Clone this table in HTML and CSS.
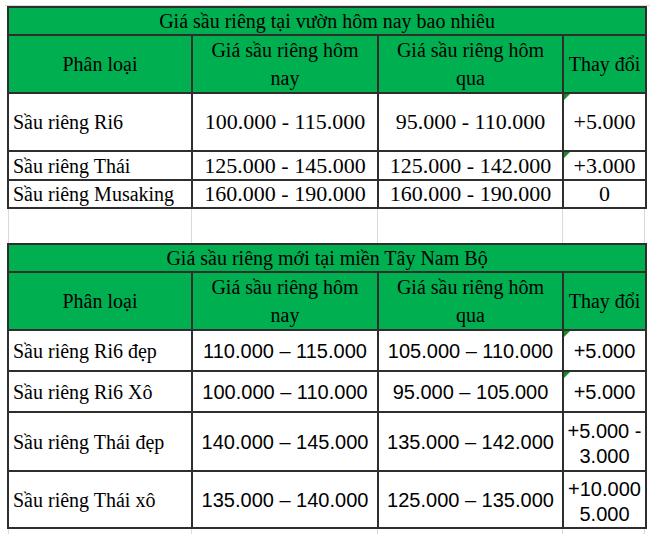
FILE: index.html
```html
<!DOCTYPE html>
<html lang="vi">
<head>
<meta charset="utf-8">
<title>Giá sầu riêng</title>
<link rel="stylesheet" href="styles.css">
</head>
<body>
<div class="sheet">
  <div class="top-grid"></div>
  <table class="price t1">
    <colgroup><col class="c1"><col class="c2"><col class="c3"><col class="c4"></colgroup>
    <tr class="r-title"><th colspan="4">Giá sầu riêng tại vườn hôm nay bao nhiêu</th></tr>
    <tr class="r-head"><th>Phân loại</th><th>Giá sầu riêng hôm<br>nay</th><th>Giá sầu riêng hôm<br>qua</th><th>Thay đổi</th></tr>
    <tr class="h58"><td class="name">Sầu riêng Ri6</td><td class="num">100.000 - 115.000</td><td class="num">95.000 - 110.000</td><td class="num flag">+5.000</td></tr>
    <tr class="h29"><td class="name">Sầu riêng Thái</td><td class="num">125.000 - 145.000</td><td class="num">125.000 - 142.000</td><td class="num flag">+3.000</td></tr>
    <tr class="h28"><td class="name">Sầu riêng Musaking</td><td class="num">160.000 - 190.000</td><td class="num">160.000 - 190.000</td><td class="num">0</td></tr>
  </table>
  <div class="gap-grid"><span></span><span></span><span></span><span></span></div>
  <table class="price t2">
    <colgroup><col class="c1"><col class="c2"><col class="c3"><col class="c4"></colgroup>
    <tr class="r-title"><th colspan="4">Giá sầu riêng mới tại miền Tây Nam Bộ</th></tr>
    <tr class="r-head"><th>Phân loại</th><th>Giá sầu riêng hôm<br>nay</th><th>Giá sầu riêng hôm<br>qua</th><th>Thay đổi</th></tr>
    <tr class="h41"><td class="name">Sầu riêng Ri6 đẹp</td><td class="sans">110.000 – 115.000</td><td class="sans">105.000 – 110.000</td><td class="sans flag">+5.000</td></tr>
    <tr class="h41"><td class="name">Sầu riêng Ri6 Xô</td><td class="sans">100.000 – 110.000</td><td class="sans">95.000 – 105.000</td><td class="sans flag">+5.000</td></tr>
    <tr class="h59"><td class="name">Sầu riêng Thái đẹp</td><td class="sans">140.000 – 145.000</td><td class="sans">135.000 – 142.000</td><td class="sans multi">+5.000 -<br>3.000</td></tr>
    <tr class="h57"><td class="name">Sầu riêng Thái xô</td><td class="sans">135.000 – 140.000</td><td class="sans">125.000 – 135.000</td><td class="sans multi">+10.000<br>5.000</td></tr>
  </table>
  <div class="gap-grid tail"><span></span><span></span><span></span><span></span></div>
</div>
</body>
</html>
```

FILE: styles.css
```css
html, body {
  margin: 0;
  padding: 0;
  background: #fff;
}

.sheet {
  width: 650px;
  height: 534px;
  overflow: hidden;
  padding-left: 7px;
  box-sizing: border-box;
}

.top-grid {
  height: 5px;
  border-bottom: 1px solid #dadada;
  margin-left: -2px;
}

.price {
  border-collapse: collapse;
  table-layout: fixed;
  width: 638px;
  font-family: "Liberation Serif", "Times New Roman", serif;
  font-size: 20px;
  color: #000;
}

.c1 { width: 184px; }
.c2 { width: 186px; }
.c3 { width: 185px; }
.c4 { width: 83px; }

.price th,
.price td {
  border: 2px solid #2e2e2e;
  padding: 0;
  text-align: center;
  vertical-align: middle;
  font-weight: normal;
  white-space: nowrap;
  position: relative;
}

.price th {
  background: #00b050;
  line-height: 28px;
}

.r-title { height: 28px; }
.r-title th { line-height: 24px; }
.r-head { height: 58px; }

.h58 { height: 58px; }
.h29 { height: 29px; }
.h28 { height: 28px; }
.h41 { height: 41px; }
.h59 { height: 59px; }
.h57 { height: 57px; }

.price td { line-height: 24px; }

.price td.name {
  text-align: left;
  padding-left: 4px;
}

.t1 td.num {
  font-size: 22px;
}

.t2 td.sans {
  font-family: "Liberation Sans", Arial, sans-serif;
  font-size: 20px;
}

.t2 td.multi {
  line-height: 25px;
  padding-top: 4px;
}

.price td.flag::before {
  content: "";
  position: absolute;
  top: 0;
  left: 0;
  border-top: 6px solid #1b8a2a;
  border-right: 6px solid transparent;
}

.gap-grid {
  display: grid;
  grid-template-columns: 184px 186px 185px 83px;
  height: 34px;
  width: 638px;
}

.gap-grid span {
  border-left: 1px solid #dadada;
}

.gap-grid span:first-child {
  margin-left: 1px;
}

.gap-grid span:last-child {
  border-right: 1px solid #dadada;
}

.gap-grid.tail {
  height: 12px;
}
```
